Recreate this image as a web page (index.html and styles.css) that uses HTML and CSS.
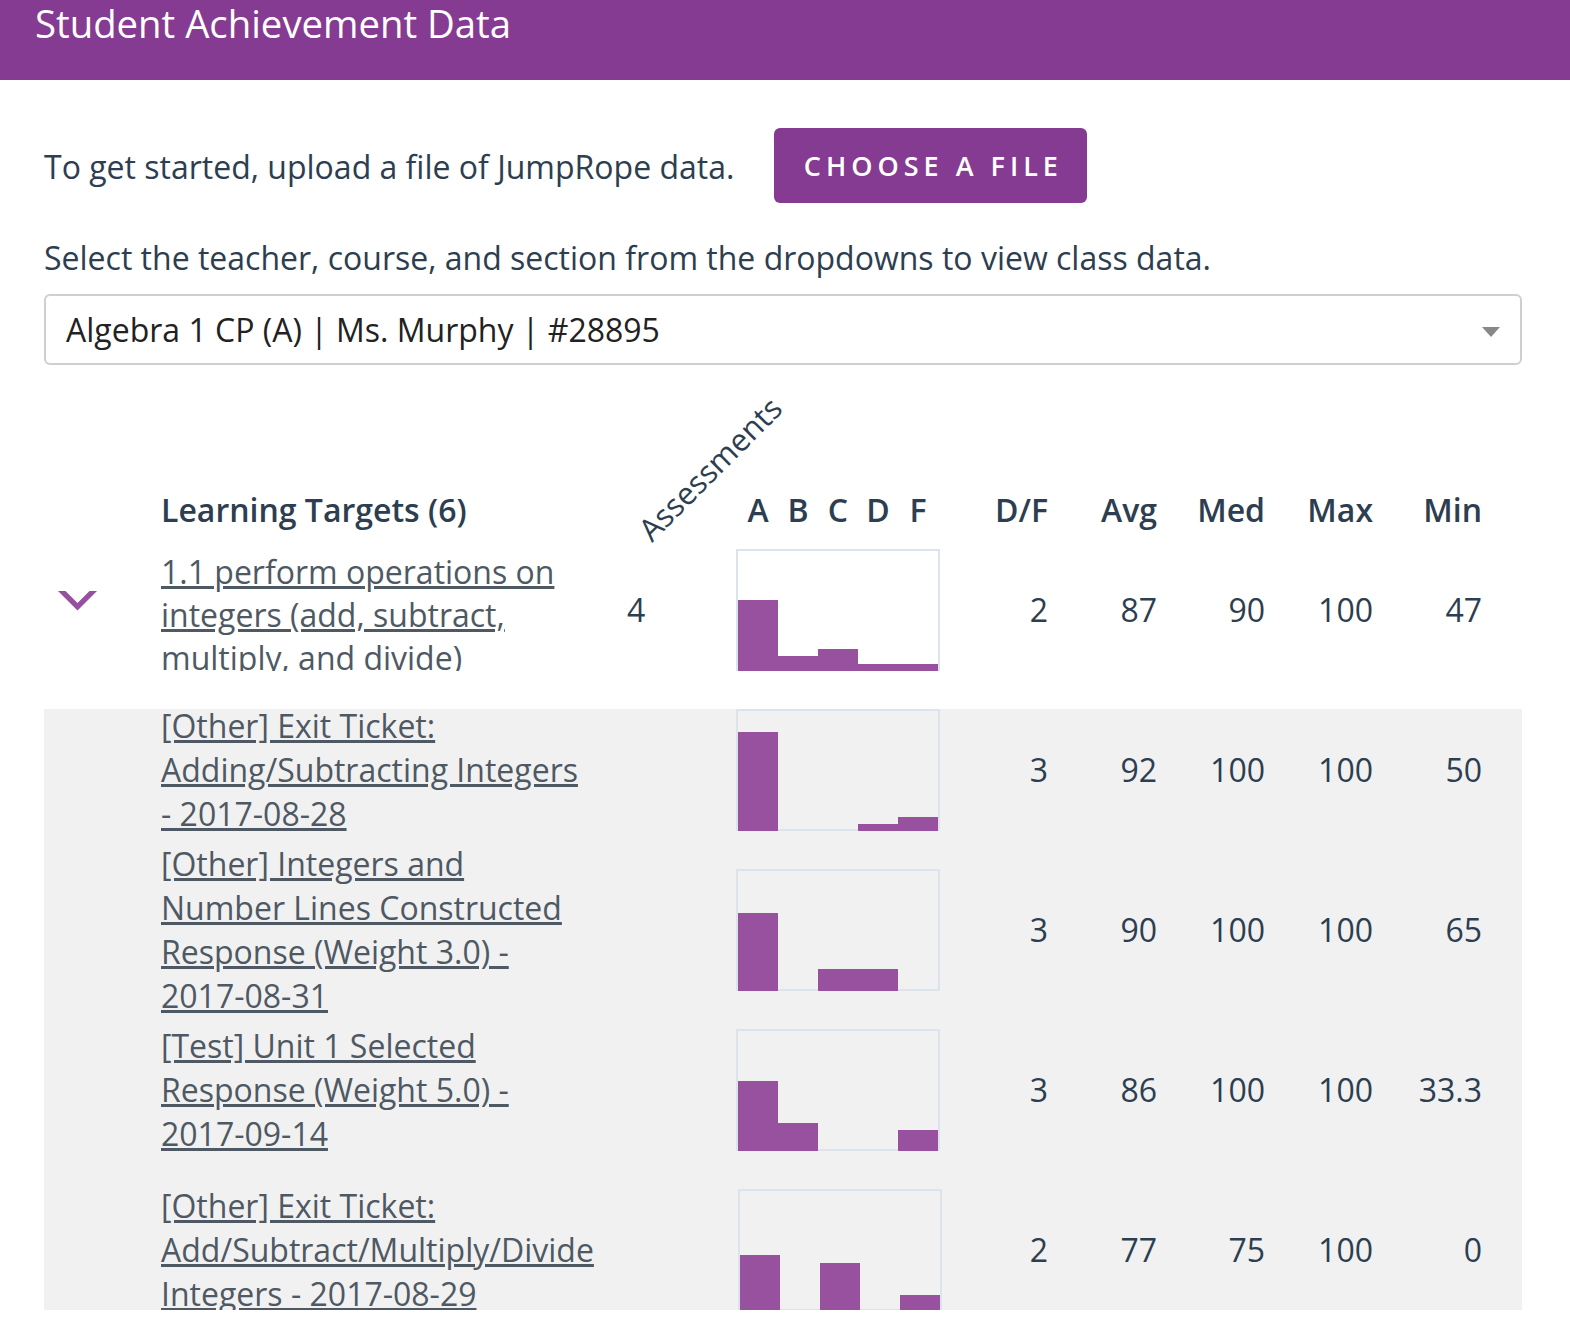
FILE: index.html
```html
<!DOCTYPE html>
<html lang="en">
<head>
<meta charset="utf-8">
<title>Student Achievement Data</title>
<link rel="stylesheet" href="styles.css">
</head>
<body>
<header class="topbar"><h1>Student Achievement Data</h1></header>
<main class="content">
  <div class="intro">
    <p>To get started, upload a file of JumpRope data.</p>
    <button class="btn" type="button">Choose a file</button>
  </div>
  <p class="hint">Select the teacher, course, and section from the dropdowns to view class data.</p>
  <div class="select">
    <span>Algebra 1 CP (A) | Ms. Murphy | #28895</span>
    <span class="caret"></span>
  </div>

  <section class="table">
    <div class="row head">
      <div></div>
      <div class="th">Learning Targets (6)</div>
      <div class="th count-head"><span class="rot">Assessments</span></div>
      <div class="th grades"><span>A</span><span>B</span><span>C</span><span>D</span><span>F</span></div>
      <div class="th num">D/F</div>
      <div class="th num">Avg</div>
      <div class="th num">Med</div>
      <div class="th num">Max</div>
      <div class="th num">Min</div>
    </div>

    <div class="row target">
      <div class="chev"><svg width="40" height="20" viewBox="0 0 40 20"><polygon points="0,0 7.5,0 19.5,12 31.5,0 39,0 19.5,19.5" fill="#96509f"/></svg></div>
      <div class="title clamp"><a href="#">1.1 perform operations on integers (add, subtract, multiply, and divide)</a></div>
      <div class="count">4</div>
      <div class="chart"><i class="bar" style="height:71px"></i><i class="bar" style="height:15px"></i><i class="bar" style="height:22px"></i><i class="bar" style="height:7px"></i><i class="bar" style="height:7px"></i></div>
      <div class="num">2</div><div class="num">87</div><div class="num">90</div><div class="num">100</div><div class="num">47</div>
    </div>

    <div class="details">
      <div class="row">
        <div></div>
        <div class="title"><a href="#">[Other] Exit Ticket: Adding/Subtracting Integers - 2017-08-28</a></div>
        <div class="count"></div>
        <div class="chart"><i class="bar" style="height:99px"></i><i class="bar" style="height:0"></i><i class="bar" style="height:0"></i><i class="bar" style="height:7px"></i><i class="bar" style="height:14px"></i></div>
        <div class="num">3</div><div class="num">92</div><div class="num">100</div><div class="num">100</div><div class="num">50</div>
      </div>
      <div class="row">
        <div></div>
        <div class="title"><a href="#">[Other] Integers and Number Lines Constructed Response (Weight 3.0) - 2017-08-31</a></div>
        <div class="count"></div>
        <div class="chart"><i class="bar" style="height:78px"></i><i class="bar" style="height:0"></i><i class="bar" style="height:22px"></i><i class="bar" style="height:22px"></i><i class="bar" style="height:0"></i></div>
        <div class="num">3</div><div class="num">90</div><div class="num">100</div><div class="num">100</div><div class="num">65</div>
      </div>
      <div class="row">
        <div></div>
        <div class="title"><a href="#">[Test] Unit 1 Selected Response (Weight 5.0) - 2017-09-14</a></div>
        <div class="count"></div>
        <div class="chart"><i class="bar" style="height:70px"></i><i class="bar" style="height:28px"></i><i class="bar" style="height:0"></i><i class="bar" style="height:0"></i><i class="bar" style="height:21px"></i></div>
        <div class="num">3</div><div class="num">86</div><div class="num">100</div><div class="num">100</div><div class="num">33.3</div>
      </div>
      <div class="row">
        <div></div>
        <div class="title"><a href="#">[Other] Exit Ticket: Add/Subtract/Multiply/Divide Integers - 2017-08-29</a></div>
        <div class="count"></div>
        <div class="chart shifted"><i class="bar" style="height:56px"></i><i class="bar" style="height:0"></i><i class="bar" style="height:48px"></i><i class="bar" style="height:0"></i><i class="bar" style="height:16px"></i></div>
        <div class="num">2</div><div class="num">77</div><div class="num">75</div><div class="num">100</div><div class="num">0</div>
      </div>
    </div>
  </section>
</main>
</body>
</html>
```

FILE: styles.css
```css
* { box-sizing: border-box; }

body {
  margin: 0;
  font-family: "Open Sans", "DejaVu Sans", sans-serif;
  color: #2c3e50;
  background: #fff;
}

.topbar {
  height: 80px;
  background: #853b91;
  color: #fff;
  padding: 4px 35px 0;
}

.topbar h1 {
  margin: 0;
  font-size: 38.3px;
  line-height: 38px;
  font-weight: 400;
}

.content {
  padding: 0 48px 0 44px;
}

.intro {
  display: flex;
  align-items: center;
  gap: 40px;
  margin-top: 48px;
}

.intro p {
  margin: 0;
  padding-top: 3px;
  font-size: 32px;
  line-height: 44px;
}

.btn {
  width: 313px;
  height: 75px;
  padding: 0 0 0 5px;
  border: 0;
  border-radius: 6px;
  background: #853b91;
  color: #fff;
  font-family: "Open Sans", sans-serif;
  font-size: 27px;
  font-weight: 600;
  letter-spacing: 5px;
  text-transform: uppercase;
}

.hint {
  margin: 33px 0 0;
  font-size: 32px;
  line-height: 44px;
}

.select {
  margin-top: 14px;
  height: 71px;
  border: 2px solid #cfcfcf;
  border-radius: 6px;
  display: flex;
  align-items: center;
  justify-content: space-between;
  padding: 0 20px;
  font-size: 32px;
  color: #222;
}

.caret {
  width: 0;
  height: 0;
  border-left: 9px solid transparent;
  border-right: 9px solid transparent;
  border-top: 10px solid #888;
  margin-top: 4px;
}

.table {
  margin-top: 123px;
}

.row {
  display: grid;
  grid-template-columns: 117px 440px 135px 204px 109px 109px 108px 108px 109px;
  grid-template-rows: 122px;
  height: 122px;
  align-items: center;
  font-size: 32px;
  line-height: 44px;
}

.row.head {
  grid-template-rows: 44px;
  height: 44px;
}

.th {
  font-weight: 600;
  color: #2c3e50;
}

.count-head {
  position: relative;
  height: 44px;
}

.rot {
  position: absolute;
  left: 53px;
  top: 27px;
  font-size: 31px;
  line-height: 30px;
  font-weight: 400;
  white-space: nowrap;
  transform: rotate(-45deg);
  transform-origin: 0 100%;
}

.grades {
  display: flex;
  padding-left: 2px;
}

.grades span {
  width: 40px;
  text-align: center;
}

.num {
  text-align: right;
  padding-right: 1px;
}

.row.target {
  margin-top: 17px;
}

.chev {
  align-self: start;
  padding: 42px 0 0 14px;
  line-height: 0;
}

.title {
  padding-right: 6px;
}

.title a {
  color: #4e5964;
  text-decoration: underline;
}

.title.clamp {
  align-self: stretch;
  overflow: hidden;
  line-height: 43px;
  padding-top: 1px;
}

.count {
  padding-left: 26px;
}

.chart {
  display: flex;
  align-items: flex-end;
  width: 204px;
  height: 122px;
  border: 2px solid #dde3ea;
}

.chart.shifted {
  margin-left: 2px;
}

.bar {
  display: block;
  flex: none;
  width: 40px;
  margin-bottom: -2px;
  background: #97519f;
}

.details {
  margin-top: 38px;
  height: 601px;
  overflow: hidden;
  background: #f1f1f1;
  display: flex;
  flex-direction: column;
  gap: 38px;
}
```
